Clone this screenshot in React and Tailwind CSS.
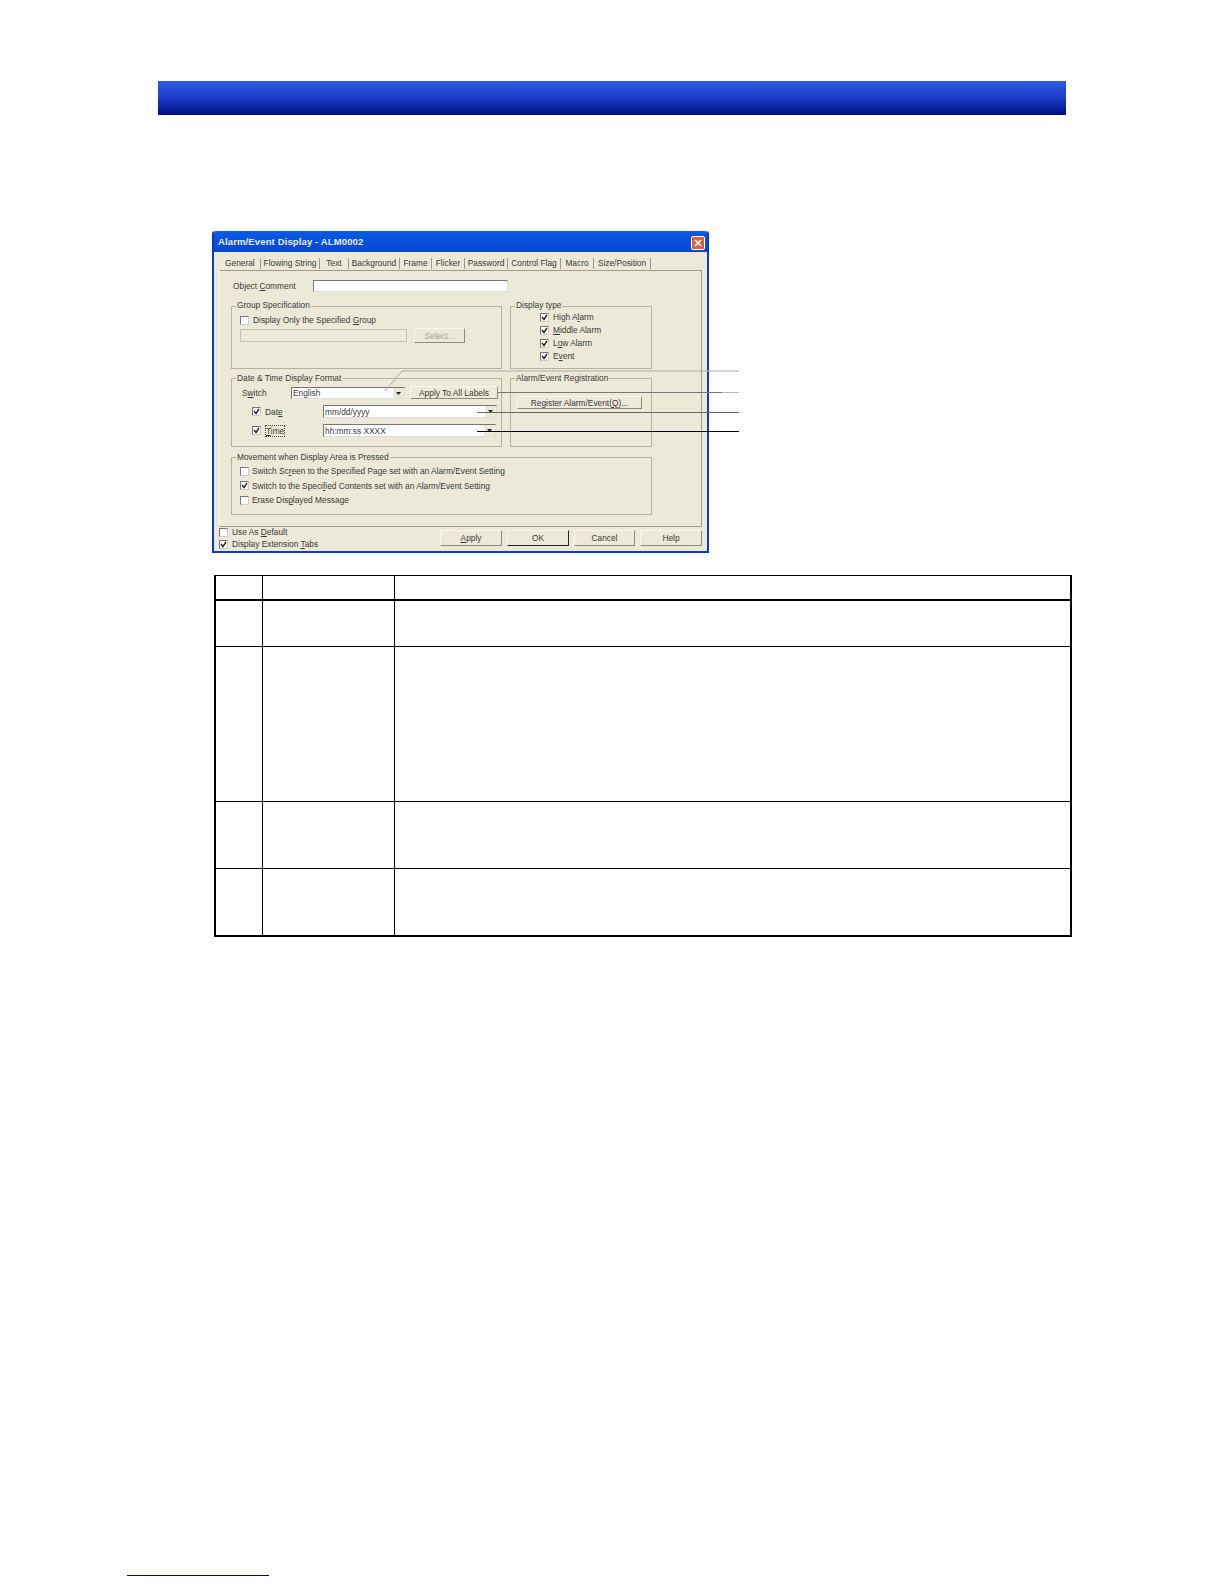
function Check({ checked }) {
  return (
    <span className="flex h-[9px] w-[9px] shrink-0 items-center justify-center border border-t-[#777] border-l-[#777] border-r-[#ccc] border-b-[#ccc] bg-white">
      {checked && (
        <svg width="7" height="7" viewBox="0 0 7 7">
          <path d="M1 3 L3 5.5 L6 1" fill="none" stroke="#222" strokeWidth="1.4" />
        </svg>
      )}
    </span>
  );
}

function CheckRow({ checked, gap = "gap-[4px]", className = "", children }) {
  return (
    <div className={"flex items-center " + gap + " " + className}>
      <Check checked={checked} />
      <span>{children}</span>
    </div>
  );
}

function Group({ title, className, legend = "", body = "", children }) {
  return (
    <fieldset className={"min-w-0 border border-[#b5b2a0] " + className}>
      <legend className={"ml-[4px] px-[1px] leading-[10px] " + legend}>{title}</legend>
      <div className={body}>{children}</div>
    </fieldset>
  );
}

function Btn({ className, children }) {
  return (
    <div className={"flex items-center justify-center border border-[#f8f7ef] border-r-[#8d8b7c] border-b-[#8d8b7c] bg-[#ece9d8] " + className}>
      {children}
    </div>
  );
}

function Combo({ text, className }) {
  return (
    <div className={"flex items-center justify-between border border-[#777] border-r-[#ddd] border-b-[#ddd] bg-white pl-[1px] " + className}>
      <span>{text}</span>
      <span className="flex h-full w-[11px] items-center justify-center bg-[#ece9d8]">
        <svg width="5" height="3" viewBox="0 0 5 3">
          <path d="M0 0 H5 L2.5 3 Z" fill="#222" />
        </svg>
      </span>
    </div>
  );
}

const tabs = [
  { label: "Flowing String", width: "w-[59px]" },
  { label: "Text", width: "w-[29px]" },
  { label: "Background", width: "w-[51px]" },
  { label: "Frame", width: "w-[32px]" },
  { label: "Flicker", width: "w-[33px]" },
  { label: "Password", width: "w-[43px]" },
  { label: "Control Flag", width: "w-[53px]" },
  { label: "Macro", width: "w-[33px]" },
  { label: "Size/Position", width: "w-[57px]" },
];

function Dialog() {
  return (
    <div className="ml-[212px] mt-[116px] flex h-[322px] w-[497px] flex-col rounded-t-[3px] border-x-[2px] border-b-[2px] border-[#0a3cc8] bg-[#ece9d8] font-['Liberation_Sans',sans-serif] text-[8.35px] leading-[10px] text-[#3a3a3a]">
      <div className="flex h-[21px] shrink-0 items-center justify-between rounded-t-[3px] bg-gradient-to-b from-[#0a5ae6] via-[#0a50dc] to-[#0646d2] pl-[4px] pr-[2px]">
        <span className="mt-[1px] text-[9.5px] font-bold tracking-[0.13px] text-[#e6eeff]">Alarm/Event Display - ALM0002</span>
        <span className="mt-[3px] flex h-[14px] w-[14px] items-center justify-center rounded-[2px] border border-white bg-[#d8603c]">
          <svg width="10" height="10" viewBox="0 0 10 10">
            <path d="M2 2 L8 8 M8 2 L2 8" stroke="#fff" strokeWidth="1.7" />
          </svg>
        </span>
      </div>

      <div className="flex h-[18px] shrink-0 items-center pl-[11px] pt-[4px]">
        <span className="w-[35px]">General</span>
        {tabs.map((t) => (
          <span key={t.label} className={"h-[11px] overflow-hidden whitespace-nowrap border-l border-[#9a9888] text-center " + t.width}>{t.label}</span>
        ))}
        <span className="h-[11px] border-l border-[#9a9888]" />
      </div>

      <div className="ml-[5px] h-[257px] w-[483px] shrink-0 border border-[#9e9c8c] border-l-[#f8f7ef] pl-[11px] pt-[9px]">
        <div className="flex h-[12px] items-center">
          <span className="w-[82px] pl-[2px]">Object <u>C</u>omment</span>
          <div className="h-[12px] w-[195px] border border-[#777] border-r-[#ddd] border-b-[#ddd] bg-white" />
        </div>

        <div className="mt-[9px] grid grid-cols-[271px_142px] gap-x-[8px] gap-y-[4px]">
          <Group title="Group Specification" className="h-[68px]" legend="-translate-y-px" body="pl-[8px] pt-[4px]">
            <CheckRow>Display Only the Specified <u>G</u>roup</CheckRow>
            <div className="mt-[3px] flex items-center gap-[7px]">
              <div className="h-[13px] w-[167px] border border-[#c5c2b2]" />
              <Btn className="h-[15px] w-[51px] text-[#a5a394]">Select...</Btn>
            </div>
          </Group>

          <Group title="Display type" className="h-[68px]" legend="-translate-y-px" body="pl-[29px] pt-[1px]">
            <div className="flex flex-col gap-[3px]">
              <CheckRow checked>High A<u>l</u>arm</CheckRow>
              <CheckRow checked><u>M</u>iddle Alarm</CheckRow>
              <CheckRow checked>L<u>o</u>w Alarm</CheckRow>
              <CheckRow checked>E<u>v</u>ent</CheckRow>
            </div>
          </Group>

          <Group title="Date & Time Display Format" className="h-[74px]" body="pt-[3px]">
            <div className="flex items-end">
              <span className="ml-[10px] w-[49px] pb-[1px]">S<u>w</u>itch</span>
              <Combo text="English" className="h-[12px] w-[114px]" />
              <Btn className="ml-[5px] h-[13px] w-[88px]">Apply To All Labels</Btn>
            </div>
            <div className="mt-[6px] flex items-center">
              <CheckRow checked className="ml-[20px] w-[71px]">Dat<u>e</u></CheckRow>
              <Combo text="mm/dd/yyyy" className="h-[13px] w-[174px]" />
            </div>
            <div className="mt-[6px] flex items-center">
              <CheckRow checked className="ml-[20px] w-[71px]">
                <span className="border border-dotted border-[#444] leading-[9px]"><u>T</u>ime</span>
              </CheckRow>
              <Combo text="hh:mm:ss XXXX" className="h-[13px] w-[173px]" />
            </div>
          </Group>

          <Group title="Alarm/Event Registration" className="h-[74px]" body="pl-[6px] pt-[13px]">
            <Btn className="h-[13px] w-[125px]">Register Alarm/Event(<u>Q</u>)...</Btn>
          </Group>

          <Group title="Movement when Display Area is Pressed" className="col-span-2 mt-[1px] h-[63px]" body="pl-[8px] pt-[4px]">
            <div className="flex flex-col gap-[4.5px]">
              <CheckRow gap="gap-[3px]">Switch Sc<u>r</u>een to the Specified Page set with an Alarm/Event Setting</CheckRow>
              <CheckRow gap="gap-[3px]" checked>Switch to the Speci<u>f</u>ied Contents set with an Alarm/Event Setting</CheckRow>
              <CheckRow gap="gap-[3px]">Erase Dis<u>p</u>layed Message</CheckRow>
            </div>
          </Group>
        </div>
      </div>

      <div className="flex w-[488px] flex-1 justify-between pl-[5px]">
        <div className="flex flex-col gap-[2px]">
          <CheckRow>Use As <u>D</u>efault</CheckRow>
          <CheckRow checked>Display Extension <u>T</u>abs</CheckRow>
        </div>
        <div className="flex items-start gap-[5px] pt-[3px]">
          <Btn className="h-[16px] w-[62px]"><u>A</u>pply</Btn>
          <Btn className="h-[16px] w-[62px] border-[#222] border-r-[#222] border-b-[#222]">OK</Btn>
          <Btn className="h-[16px] w-[61px]">Cancel</Btn>
          <Btn className="h-[16px] w-[62px]">Help</Btn>
        </div>
      </div>
    </div>
  );
}

const rows = ["h-[46px]", "h-[155px]", "h-[67px]", "h-[66px]"];

function InfoTable() {
  return (
    <div className="ml-[214px] mt-[22px] w-[858px] border-b-[2px] border-l-[2px] border-r-[2px] border-t-[1px] border-black">
      <div className="grid h-[25px] grid-cols-[47px_132px_1fr] border-b-[2px] border-black">
        <div className="border-r border-black" />
        <div className="border-r border-black" />
        <div />
      </div>
      {rows.map((h, i) => (
        <div key={i} className={"grid grid-cols-[47px_132px_1fr] " + h + (i < 3 ? " border-b border-black" : "")}>
          <div className="border-r border-black" />
          <div className="border-r border-black" />
          <div />
        </div>
      ))}
    </div>
  );
}

export default function App() {
  return (
    <div className="relative h-[1584px] w-[1224px] overflow-hidden bg-white">
      <div className="ml-[158px] pt-[81px]">
        <div className="h-[34px] w-[908px] bg-gradient-to-b from-[#2f5ae6] via-[#1c3cc4] to-[#000a80]" />
      </div>
      <Dialog />
      <InfoTable />
      <div className="ml-[127px] mt-[638px] h-[1px] w-[142px] bg-[#000090]" />

      {/* leader lines running from the dialog out to the callouts */}
      <svg className="pointer-events-none absolute left-0 top-0" width="1224" height="1584">
        <path d="M385 391 L402 371 H739" fill="none" stroke="#aaa" strokeWidth="1" />
        <path d="M497 392.5 H722" fill="none" stroke="#777" strokeWidth="1" />
        <path d="M722 392.5 H739" fill="none" stroke="#bbb" strokeWidth="1" />
        <path d="M477 412.5 H739" fill="none" stroke="#666" strokeWidth="1" />
        <path d="M477 431.5 H739" fill="none" stroke="#000" strokeWidth="1" />
      </svg>
    </div>
  );
}
